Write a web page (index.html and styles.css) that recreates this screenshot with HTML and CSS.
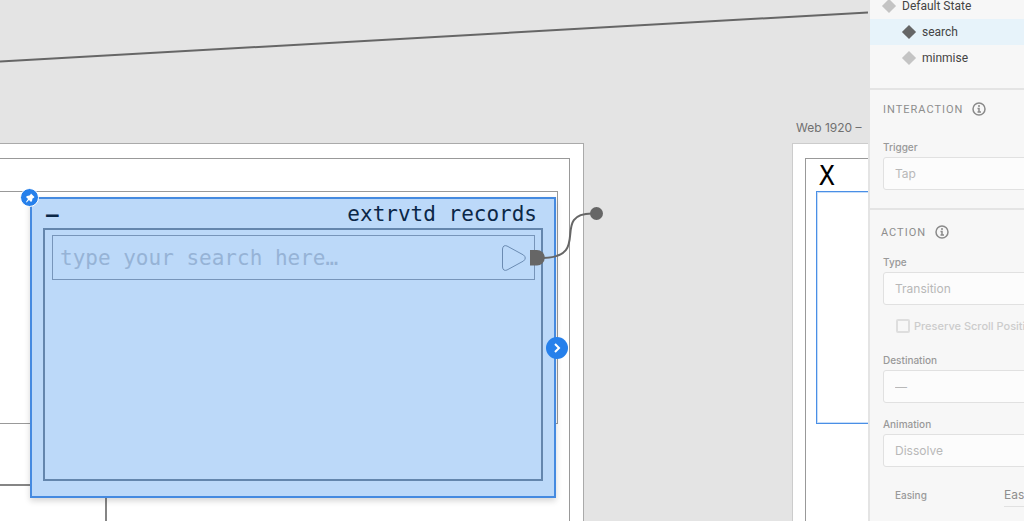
FILE: index.html
```html
<!DOCTYPE html>
<html lang="en">
<head>
    <meta charset="UTF-8">
    <meta name="viewport" content="width=device-width, initial-scale=1.0">
    <title>Prototype</title>
    <link rel="stylesheet" href="styles.css">
</head>
<body>
    <main class="canvas">
        <section class="artboard artboard-main">
            <div class="frame"></div>
            <div class="panel"></div>
            <div class="footer-box"></div>
        </section>

        <section class="artboard artboard-next">
            <div class="frame"></div>
            <button type="button" class="close">X</button>
            <div class="panel"></div>
        </section>
        <span class="artboard-name">Web 1920 –</span>

        <section class="window">
            <header class="window-header">
                <button type="button" class="minimise">–</button>
                <h1>extrvtd records</h1>
            </header>
            <div class="window-body">
                <form class="search">
                    <input type="text" aria-label="Search" placeholder="type your search here…">
                    <button type="button" class="go" aria-label="Go">
                        <svg width="26" height="28" viewBox="0 0 26 28">
                            <path d="M1.500 5V23Q2 27.500 6 26L22.500 17Q26 14 22.500 11L6 2Q2 .500 1.500 5Z" />
                        </svg>
                    </button>
                </form>
            </div>
        </section>

        <svg class="wires" width="868" height="521" viewBox="0 0 868 521">
            <path d="M0 61.500L868 12.500" />
            <path d="M543 258C592 257 550 214 592 213.500" />
            <path class="solid" d="M530 250H537A7.500 7.500 0 0 1 537 265.500H530Z" />
            <circle class="solid" cx="596.500" cy="213.500" r="6.500" />
        </svg>

        <button type="button" class="badge pin" aria-label="Pinned">
            <svg width="18" height="18" viewBox="0 0 18 18">
                <path d="M10 4.500L13.500 8L12.500 9L11.500 9.500L11 12L10 13L8 11L5.500 13.500L5 13L7 10L5 8L6 7L8.500 6.500L9.500 5.500Z" />
            </svg>
        </button>
        <button type="button" class="badge connect" aria-label="Connect">
            <svg width="22" height="22" viewBox="0 0 22 22">
                <path d="M9 7L13 11L9 15" />
            </svg>
        </button>
    </main>

    <aside class="sidebar">
        <div class="inspector">
            <ul class="states">
                <li><button type="button" class="state"><span class="diamond"></span>Default State</button></li>
                <li><button type="button" class="state child selected"><span class="diamond"></span>search</button></li>
                <li><button type="button" class="state child"><span class="diamond"></span>minmise</button></li>
            </ul>

            <section class="group interaction">
                <h2>INTERACTION
                    <svg class="info" width="14" height="14" viewBox="0 0 14 14"><circle cx="7" cy="7" r="6" /><path d="M7 3V5M5.500 6.500H7V10M5.500 10H9" /></svg>
                </h2>
                <label for="trigger">Trigger</label>
                <select id="trigger"><option>Tap</option></select>
            </section>

            <section class="group action">
                <h2>ACTION
                    <svg class="info" width="14" height="14" viewBox="0 0 14 14"><circle cx="7" cy="7" r="6" /><path d="M7 3V5M5.500 6.500H7V10M5.500 10H9" /></svg>
                </h2>
                <label for="type">Type</label>
                <select id="type"><option>Transition</option></select>
                <div class="check">
                    <input type="checkbox" id="preserve">
                    <label for="preserve">Preserve Scroll Position</label>
                </div>
                <label for="destination">Destination</label>
                <select id="destination"><option>—</option></select>
                <label for="animation" class="spaced">Animation</label>
                <select id="animation"><option>Dissolve</option></select>
                <div class="easing">
                    <label for="easing">Easing</label>
                    <select id="easing"><option>Ease Out</option></select>
                </div>
            </section>
        </div>
    </aside>
</body>
</html>
```

FILE: styles.css
```css
* {
    box-sizing: border-box;
}
body {
    display: flex;
    height: 100vh;
    margin: 0;
    overflow: hidden;
    background-color: #e4e4e4;
    font-family: 'Inter', 'Liberation Sans', sans-serif;
}
button {
    padding: 0;
    border: none;
    background: none;
    font-family: inherit;
}
.canvas {
    position: relative;
    flex: 1;
    min-width: 0;
    overflow: hidden;
}

/* Artboards on the canvas */
.artboard {
    position: absolute;
    top: 143px;
    height: 600px;
    background-color: #fff;
    border: 1px solid #aaa;
}
.artboard-main {
    left: -16px;
    width: 600px;
}
.artboard-next {
    left: 792px;
    width: 600px;
    border-color: #ccc;
}
.frame, .panel, .footer-box, .close {
    position: absolute;
}
.frame {
    top: 14px;
    left: 12px;
    right: 13px;
    height: 560px;
    border: 1px solid #999;
}
.artboard-main .frame {
    left: -1px;
}
.panel {
    top: 47px;
    right: 25px;
    left: 23px;
    height: 233px;
    border: 1px solid #4a8fe6;
    box-shadow: inset 0 0 0 1px #c8def8;
}
.artboard-main .panel {
    left: -1px;
    border-color: #999;
    box-shadow: none;
}
.footer-box {
    top: 340px;
    left: -1px;
    width: 123px;
    height: 200px;
    border: 2px solid #858585;
}
.close {
    top: 16px;
    left: 26px;
    font-family: 'DejaVu Sans Mono', monospace;
    font-size: 26px;
    line-height: 32px;
    color: #000;
}
.artboard-name {
    position: absolute;
    top: 120px;
    left: 796px;
    font-size: 12px;
    line-height: 16px;
    color: #707070;
    white-space: nowrap;
}

/* Selected component */
.window {
    position: absolute;
    top: 197px;
    left: 30px;
    display: flex;
    flex-direction: column;
    width: 526px;
    height: 301px;
    padding: 0 11px 15px;
    background-color: #bcd9f9;
    border: 2px solid #458ae0;
    box-shadow: 0 3px 6px rgba(0, 0, 0, 0.16);
    font-family: 'DejaVu Sans Mono', monospace;
    font-size: 21px;
}
.window-header {
    display: flex;
    justify-content: space-between;
    height: 29px;
    padding: 0 6px 0 3px;
    line-height: 30px;
    color: #0b2747;
}
.window-header h1 {
    margin: 0;
    font-size: 21px;
    font-weight: normal;
}
.minimise {
    font-size: 21px;
    font-weight: bold;
    line-height: 32px;
    color: #0b2747;
}
.window-body {
    flex: 1;
    padding: 5px 6px 5px 7px;
    border: 2px solid #6486ad;
}
.search {
    display: flex;
    align-items: center;
    height: 45px;
    padding: 0 7px;
    border: 1px solid #7795ba;
}
.search input {
    flex: 1;
    min-width: 0;
    padding: 0;
    border: none;
    background: none;
    font-family: inherit;
    font-size: 21px;
    color: #0b2747;
}
.search input::placeholder {
    color: #96b3d6;
    opacity: 1;
}
.go {
    height: 28px;
}
.go svg {
    display: block;
    fill: none;
    stroke: #6b8bb2;
}

/* Prototype wires and handles */
.wires {
    position: absolute;
    top: 0;
    left: 0;
    fill: none;
    stroke: #666;
    stroke-width: 2;
    pointer-events: none;
}
.wires .solid {
    fill: #666;
    stroke: none;
}
.badge {
    position: absolute;
    border-radius: 50%;
    background-color: #2680eb;
}
.badge svg {
    display: block;
}
.pin {
    top: 188px;
    left: 20px;
    width: 19px;
    height: 19px;
    border: 1px solid #fff;
}
.pin svg {
    fill: #fff;
}
.connect {
    top: 337px;
    left: 546px;
    width: 22px;
    height: 22px;
}
.connect svg {
    fill: none;
    stroke: #fff;
    stroke-width: 2;
}

/* Sidebar */
.sidebar {
    flex: 0 0 156px;
    overflow: hidden;
    background-color: #f7f7f7;
    border-left: 2px solid #e4e4e4;
}
.inspector {
    width: 260px;
}
.states {
    margin: -7px 0 17px;
    padding: 0;
    list-style: none;
}
.state {
    display: flex;
    align-items: center;
    gap: 8px;
    width: 100%;
    height: 26px;
    padding-left: 14px;
    font-family: 'Roboto', 'Liberation Sans', sans-serif;
    font-size: 12px;
    color: #444;
}
.state.child {
    padding-left: 34px;
}
.state.selected {
    background-color: #e7f3fa;
}
.diamond {
    width: 10px;
    height: 10px;
    background-color: #c4c4c4;
    transform: rotate(45deg);
}
.selected .diamond {
    background-color: #666;
}
.group {
    padding: 11px 0 0 13px;
    border-top: 2px solid #e4e4e4;
}
.interaction {
    padding-bottom: 18px;
}
.group h2 {
    display: flex;
    align-items: center;
    gap: 9px;
    height: 16px;
    margin: 0 0 22px;
    font-family: 'Roboto', 'Liberation Sans', sans-serif;
    font-size: 11px;
    font-weight: normal;
    letter-spacing: 1px;
    color: #8e8e8e;
}
.group.action h2 {
    margin: 3px 0 14px -2px;
}
.info {
    fill: none;
    stroke: #8a8a8a;
    stroke-width: 1.5;
}
.group label {
    display: block;
    font-size: 10px;
    font-weight: 500;
    line-height: 16px;
    color: #999;
}
.group label.spaced {
    margin-top: 13px;
}
.group select {
    display: block;
    width: 230px;
    height: 33px;
    margin-top: 2px;
    padding: 0 11px;
    appearance: none;
    border: 1px solid #e1e1e1;
    border-radius: 3px;
    background-color: #fcfcfc;
    font-family: inherit;
    font-size: 12px;
    color: #b8b8b8;
}
.check {
    display: flex;
    align-items: center;
    gap: 4px;
    height: 16px;
    margin: 13px 0 18px 13px;
}
.check input {
    width: 14px;
    height: 14px;
    margin: 0;
    appearance: none;
    border: 2px solid #dedede;
    border-radius: 2px;
}
.group .check label {
    font-size: 11px;
    color: #ccc;
    white-space: nowrap;
}
.easing {
    display: flex;
    align-items: center;
    justify-content: space-between;
    height: 24px;
    margin: 16px 17px 0 12px;
}
.group .easing select {
    width: 109px;
    height: 24px;
    margin: 0;
    padding: 0;
    border-width: 0 0 1px;
    border-radius: 0;
    background: none;
    color: #8e8e8e;
}
```
